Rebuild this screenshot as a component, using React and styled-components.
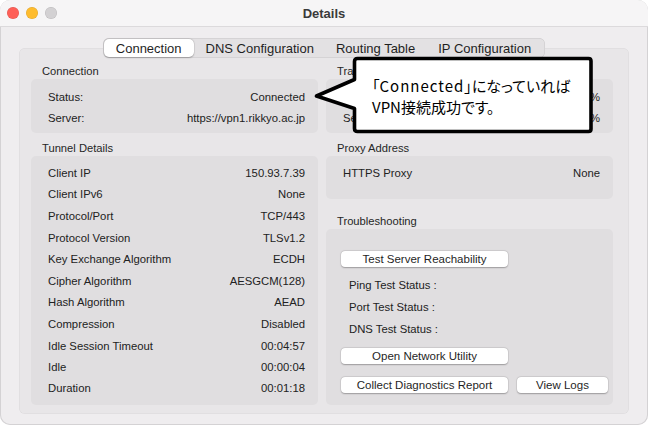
import React from 'react'
import styled, { createGlobalStyle } from 'styled-components'

const GlobalStyle = createGlobalStyle`
  html, body {
    margin: 0;
    padding: 0;
    background: #ffffff;
  }
  body {
    font-family: "Liberation Sans", Arial, sans-serif;
    color: #222222;
  }
`

const Window = styled.div`
  position: relative;
  box-sizing: border-box;
  width: 648px;
  height: 425px;
  display: flex;
  flex-direction: column;
  background: #efedef;
  border-radius: 10px;
  overflow: hidden;
  box-shadow: inset 0 0 0 1px #d4d2d4;
`

const TitleBar = styled.div`
  position: relative;
  height: 26px;
  flex: none;
  display: flex;
  align-items: center;
  justify-content: center;
  background: #f6f5f6;
  border-bottom: 1px solid #dcdadc;
`

const Lights = styled.div`
  position: absolute;
  left: 7px;
  top: 7px;
  display: flex;
  gap: 7px;
`

const Light = styled.span`
  width: 12px;
  height: 12px;
  border-radius: 50%;
  background: ${p => p.color};
  box-shadow: inset 0 0 0 0.5px rgba(0, 0, 0, 0.12);
`

const Title = styled.div`
  font-size: 13px;
  font-weight: bold;
  color: #3a3a3a;
`

const Body = styled.div`
  flex: 1;
  display: flex;
  flex-direction: column;
  align-items: center;
  padding: 11px 19px 12px;
`

const TabBar = styled.div`
  position: relative;
  z-index: 1;
  display: flex;
  align-items: center;
  height: 20px;
  margin-bottom: -10px;
  padding: 0 1px;
  background: #e3e1e3;
  border-radius: 6px;
  box-shadow: inset 0 0 0 0.5px rgba(0, 0, 0, 0.12);
`

const Tab = styled.div`
  position: relative;
  height: 18px;
  display: flex;
  align-items: center;
  padding: 0 ${p => p.pad}px;
  font-size: 13px;
  color: #1f1f1f;
  border-radius: 5px;
  background: ${p => (p.active ? '#ffffff' : 'transparent')};
  box-shadow: ${p =>
    p.active ? '0 0.5px 1.5px rgba(0,0,0,0.25), 0 0 0 0.5px rgba(0,0,0,0.08)' : 'none'};

  & + &::before {
    content: '';
    display: ${p => (p.divider ? 'block' : 'none')};
    position: absolute;
    left: 0;
    top: 4px;
    width: 1px;
    height: 11px;
    background: #c9c7c9;
  }
`

const GroupBox = styled.div`
  box-sizing: border-box;
  align-self: stretch;
  flex: 1;
  display: grid;
  grid-template-columns: 287px 287px;
  grid-template-rows: auto 1fr;
  column-gap: 8px;
  row-gap: 8px;
  padding: 16px 16px 9px 12px;
  background: #e8e6e8;
  border-radius: 6px;
  box-shadow: inset 0 0 0 0.5px rgba(0, 0, 0, 0.06);
`

const Section = styled.div`
  display: flex;
  flex-direction: column;
  flex: ${p => (p.grow ? 1 : 'none')};
`

const Stack = styled.div`
  display: flex;
  flex-direction: column;
  gap: 15px;
`

const SectionLabel = styled.div`
  height: 15px;
  line-height: 15px;
  padding-left: 11px;
  font-size: 11.2px;
  color: #262626;
`

const Panel = styled.div`
  box-sizing: border-box;
  flex: ${p => (p.grow ? 1 : 'none')};
  display: flex;
  flex-direction: column;
  padding: ${p => p.pad};
  background: #e0dee0;
  border-radius: 5px;
`

const Row = styled.div`
  display: flex;
  align-items: center;
  justify-content: space-between;
  height: ${p => p.h || 21}px;
  padding: 0 13px 0 17px;
  font-size: 11.3px;
  color: #222222;

  &:last-child {
    height: ${p => p.lastH || p.h || 21}px;
  }
`

const Actions = styled.div`
  display: flex;
  flex-direction: column;
  padding: 22px 0 12px 15px;
`

const ButtonRow = styled.div`
  display: flex;
  gap: 9px;
  margin-top: ${p => p.top || 0}px;
`

const Button = styled.button`
  box-sizing: border-box;
  width: ${p => p.w}px;
  height: 16px;
  padding: 0;
  border: none;
  border-radius: 4px;
  background: #ffffff;
  font-family: "Liberation Sans", Arial, sans-serif;
  font-size: 11.5px;
  color: #1f1f1f;
  box-shadow: 0 0.5px 1.5px rgba(0, 0, 0, 0.28), 0 0 0 0.5px rgba(0, 0, 0, 0.08);
`

const StatusList = styled.div`
  display: flex;
  flex-direction: column;
  margin: 7px 0 8px;
`

const Status = styled.div`
  height: 22px;
  line-height: 22px;
  padding-left: 8px;
  font-size: 11.3px;
  color: #222222;
`

const Callout = styled.div`
  position: absolute;
  left: 312px;
  top: 55px;
  width: 282px;
  height: 80px;
  z-index: 5;
`

const CalloutShape = styled.svg`
  position: absolute;
  inset: 0;
`

const CalloutText = styled.div`
  position: absolute;
  left: 60px;
  top: 20px;
  font-family: "Noto Sans CJK JP", "Noto Sans", sans-serif;
  font-feature-settings: "palt";
  font-size: 15px;
  line-height: 21px;
  color: #000000;
  white-space: nowrap;
`

const Latin = styled.span`
  letter-spacing: 1px;
`

const tunnel = [
  ['Client IP', '150.93.7.39'],
  ['Client IPv6', 'None'],
  ['Protocol/Port', 'TCP/443'],
  ['Protocol Version', 'TLSv1.2'],
  ['Key Exchange Algorithm', 'ECDH'],
  ['Cipher Algorithm', 'AESGCM(128)'],
  ['Hash Algorithm', 'AEAD'],
  ['Compression', 'Disabled'],
  ['Idle Session Timeout', '00:04:57'],
  ['Idle', '00:00:04'],
  ['Duration', '00:01:18'],
]

const tabs = [
  { name: 'Connection', pad: 12, active: true },
  { name: 'DNS Configuration', pad: 12 },
  { name: 'Routing Table', pad: 10, divider: true },
  { name: 'IP Configuration', pad: 13, divider: true },
]

export default function App() {
  return (
    <>
      <GlobalStyle />
      <Window>
        <TitleBar>
          <Lights>
            <Light color="#fe5f57" />
            <Light color="#febc2e" />
            <Light color="#d3d1d3" />
          </Lights>
          <Title>Details</Title>
        </TitleBar>

        <Body>
          <TabBar>
            {tabs.map(t => (
              <Tab key={t.name} active={t.active} pad={t.pad} divider={t.divider}>
                {t.name}
              </Tab>
            ))}
          </TabBar>

          <GroupBox>
            <Section>
              <SectionLabel>Connection</SectionLabel>
              <Panel pad="7px 0 5px">
                <Row>
                  <span>Status:</span>
                  <span>Connected</span>
                </Row>
                <Row>
                  <span>Server:</span>
                  <span>https://vpn1.rikkyo.ac.jp</span>
                </Row>
              </Panel>
            </Section>

            <Section>
              <SectionLabel>Transfer</SectionLabel>
              <Panel pad="7px 0 5px">
                <Row>
                  <span>Received:</span>
                  <span>0 %</span>
                </Row>
                <Row>
                  <span>Sent:</span>
                  <span>0 %</span>
                </Row>
              </Panel>
            </Section>

            <Section>
              <SectionLabel>Tunnel Details</SectionLabel>
              <Panel grow pad="6px 0 7px">
                {tunnel.map(([k, v]) => (
                  <Row key={k} h={21.6} lastH={19.4}>
                    <span>{k}</span>
                    <span>{v}</span>
                  </Row>
                ))}
              </Panel>
            </Section>

            <Stack>
              <Section>
                <SectionLabel>Proxy Address</SectionLabel>
                <Panel pad="6px 0 15px">
                  <Row h={22}>
                    <span>HTTPS Proxy</span>
                    <span>None</span>
                  </Row>
                </Panel>
              </Section>

              <Section grow>
                <SectionLabel>Troubleshooting</SectionLabel>
                <Panel grow pad="0">
                  <Actions>
                    <Button w={167}>Test Server Reachability</Button>
                    <StatusList>
                      <Status>Ping Test Status :</Status>
                      <Status>Port Test Status :</Status>
                      <Status>DNS Test Status :</Status>
                    </StatusList>
                    <Button w={167}>Open Network Utility</Button>
                    <ButtonRow top={13}>
                      <Button w={167}>Collect Diagnostics Report</Button>
                      <Button w={91}>View Logs</Button>
                    </ButtonRow>
                  </Actions>
                </Panel>
              </Section>
            </Stack>
          </GroupBox>
        </Body>

        <Callout>
          <CalloutShape width="282" height="80" viewBox="0 0 282 80">
            <path
              d="M45.5 3.5 H276.5 Q279 3.5 279 6 V74 Q279 76.5 276.5 76.5 H45.5 Q42.5 76.5 42.5 73.5 V53.5 L4.5 41 L42.5 24.5 V6.5 Q42.5 3.5 45.5 3.5 Z"
              fill="#ffffff"
              stroke="#000000"
              strokeWidth="3.6"
              strokeLinejoin="round"
            />
          </CalloutShape>
          <CalloutText>
            「<Latin>Connected</Latin>」になっていれば
            <br />
            VPN接続成功です。
          </CalloutText>
        </Callout>
      </Window>
    </>
  )
}
